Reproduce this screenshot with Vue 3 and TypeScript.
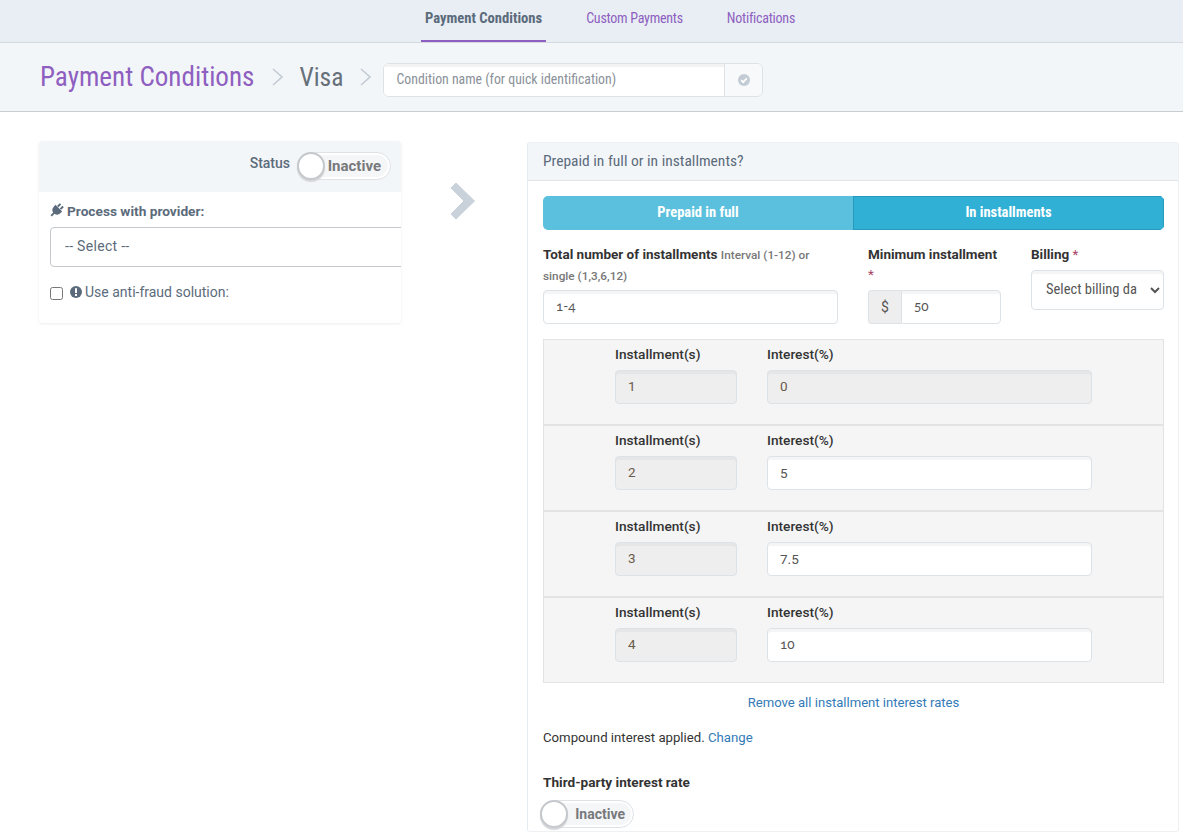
<script setup lang="ts">
interface InstallmentRow {
  count: string;
  rate: string;
  locked?: boolean;
  old?: boolean;
}

const tabs = ["Payment Conditions", "Custom Payments", "Notifications"];

const rows: InstallmentRow[] = [
  { count: "1", rate: "0", locked: true },
  { count: "2", rate: "5" },
  { count: "3", rate: "7.5" },
  { count: "4", rate: "10", old: true },
];
</script>

<template>
  <div class="page">
    <nav class="top-nav">
      <a v-for="(tab, i) in tabs" :key="tab" class="tab" :class="{ active: i === 0 }">{{ tab }}</a>
    </nav>

    <header class="crumbs">
      <span class="crumb-main">Payment Conditions</span>
      <svg class="crumb-sep" viewBox="0 0 11 18" width="11" height="18"><path d="M1 1l9 8-9 8" fill="none" stroke="#c3ccd5" stroke-width="1.6" /></svg>
      <span class="crumb-sub">Visa</span>
      <svg class="crumb-sep last" viewBox="0 0 11 18" width="11" height="18"><path d="M1 1l9 8-9 8" fill="none" stroke="#c3ccd5" stroke-width="1.6" /></svg>
      <div class="name-group">
        <input class="name-input" placeholder="Condition name (for quick identification)" />
        <span class="name-addon">
          <svg viewBox="0 0 12 12" width="12" height="12">
            <circle cx="6" cy="6" r="6" fill="#c3ccd5" />
            <path d="M3.2 6.2l2 2 3.6-3.8" fill="none" stroke="#fff" stroke-width="1.7" />
          </svg>
        </span>
      </div>
    </header>

    <main class="content">
      <section class="provider-card">
        <div class="provider-head">
          <span class="status-label">Status</span>
          <span class="toggle"><i class="knob"></i><b>Inactive</b></span>
        </div>
        <div class="provider-body">
          <label class="provider-label">
            <svg viewBox="0 0 16 16" width="15" height="15">
              <g transform="rotate(45 8 8)">
                <path d="M5 0h2v4H5zM9 0h2v4H9zM3 4.5h10v2.700a5 5 0 0 1-4 4.800V16H7v-4a5 5 0 0 1-4-4.800z" fill="#5b6b7b" />
              </g>
            </svg>
            Process with provider:
          </label>
          <select class="provider-select"><option>-- Select --</option></select>
          <label class="fraud">
            <input type="checkbox" />
            <svg viewBox="0 0 12 12" width="12" height="12">
              <circle cx="6" cy="6" r="6" fill="#5b6b7b" />
              <rect x="5" y="2.2" width="2" height="4.8" fill="#fff" />
              <rect x="5" y="8" width="2" height="2" fill="#fff" />
            </svg>
            <span>Use anti-fraud solution:</span>
          </label>
        </div>
      </section>

      <div class="arrow">
        <svg viewBox="0 0 26 38" width="26" height="38">
          <path d="M6 1L24.500 19 6 37 1 32 14 19 1 6z" fill="#c9d1da" stroke="#c9d1da" stroke-width="1" stroke-linejoin="round" />
        </svg>
      </div>

      <section class="plan-panel">
        <h3 class="plan-title">Prepaid in full or in installments?</h3>
        <div class="plan-body">
          <div class="segmented">
            <button class="seg">Prepaid in full</button>
            <button class="seg on">In installments</button>
          </div>

          <div class="fields">
            <div class="field-total">
              <label class="lbl">Total number of installments <small>Interval (1-12) or single (1,3,6,12)</small></label>
              <input class="txt old" value="1-4" />
            </div>
            <div class="field-min">
              <label class="lbl">Minimum installment <em>*</em></label>
              <div class="money">
                <span class="money-sign">$</span>
                <input class="txt old" value="50" />
              </div>
            </div>
            <div class="field-bill">
              <label class="lbl">Billing <em>*</em></label>
              <select class="bill-select"><option>Select billing day</option></select>
            </div>
          </div>

          <div class="rates">
            <div v-for="row in rows" :key="row.count" class="rate-row">
              <div class="col-count">
                <label class="lbl-sm">Installment(s)</label>
                <input class="txt" :value="row.count" disabled />
              </div>
              <div class="col-rate">
                <label class="lbl-sm">Interest(%)</label>
                <input class="txt" :class="{ old: row.old }" :value="row.rate" :disabled="row.locked" />
              </div>
            </div>
          </div>

          <a class="remove-link">Remove all installment interest rates</a>
          <p class="compound">Compound interest applied. <a>Change</a></p>
          <div class="third-label">Third-party interest rate</div>
          <span class="toggle third"><i class="knob"></i><b>Inactive</b></span>
        </div>
      </section>
    </main>
  </div>
</template>

<style>
html,
body {
  margin: 0;
  background: #fff;
  overflow: hidden;
}
</style>

<style scoped>
.page {
  height: 837px;
  overflow: hidden;
  font-family: "Roboto", "Liberation Sans", sans-serif;
  color: #333;
  font-size: 14px;
}

/* Top tabs */
.top-nav {
  display: flex;
  justify-content: center;
  gap: 36px;
  height: 42px;
  padding-left: 37px;
  background: #e8eef4;
  border-bottom: 1px solid #d5dae0;
}

.tab {
  display: block;
  padding: 0 4px;
  line-height: 37px;
  font-family: "Roboto Condensed", "Roboto", sans-serif;
  font-stretch: 75%;
  font-size: 14px;
  letter-spacing: -0.250px;
  color: #8e5fc0;
}

.tab.active {
  color: #5b6b7b;
  font-size: 14.600px;
  letter-spacing: 0;
  font-weight: 700;
  border-bottom: 2px solid #8e5fc0;
  height: 40px;
}

/* Breadcrumb header */
.crumbs {
  display: flex;
  align-items: center;
  height: 68px;
  padding-left: 40px;
  background: #f3f6f9;
  border-bottom: 1px solid #c9cdd1;
  font-family: "Roboto Condensed", "Roboto", sans-serif;
  font-stretch: 75%;
}

.crumb-main {
  font-size: 27.100px;
  color: #8e5fc0;
}

.crumb-sub {
  font-size: 25.500px;
  color: #66707a;
}

.crumb-sep {
  margin: 0 16px 0 18px;
}

.crumb-sep.last {
  margin: 0 12px 0 17px;
}

.name-group {
  display: flex;
  width: 380px;
  height: 34px;
  margin-top: 6px;
  border: 1px solid #dde2e7;
  border-radius: 6px;
  box-sizing: border-box;
  background: #fff;
  overflow: hidden;
}

.name-input {
  flex: 1;
  min-width: 0;
  border: 0;
  outline: 0;
  padding: 0 12px 2px;
  font-family: inherit;
  font-stretch: inherit;
  font-size: 13.800px;
  box-shadow: inset 0 3px 0 #f3f3f3;
}

.name-input::placeholder {
  color: #8a9199;
}

.name-addon {
  display: flex;
  align-items: center;
  justify-content: center;
  width: 37px;
  border-left: 1px solid #dde2e7;
  background: #f7f9fb;
}

/* Main columns */
.content {
  display: flex;
  align-items: flex-start;
  padding: 29px 4px 0 39px;
}

.provider-card {
  width: 362px;
  height: 182px;
  flex: none;
  overflow: hidden;
  border-radius: 3px;
  background: #fff;
  box-shadow: 0 1px 3px rgba(0, 0, 0, 0.08);
}

.provider-head {
  display: flex;
  justify-content: flex-end;
  gap: 7px;
  height: 51px;
  padding: 11px 10px 0 0;
  box-sizing: border-box;
  background: #f3f6f9;
}

.status-label {
  font-weight: 500;
  font-size: 14px;
  color: #5b6b7b;
  line-height: 22px;
}

.toggle {
  position: relative;
  display: inline-block;
  width: 94px;
  height: 28px;
  box-sizing: border-box;
  border: 1px solid #dfe3e7;
  border-radius: 14px;
  background: #f5f6f7;
  box-shadow: inset 0 0 0 2px #fff;
  text-align: right;
  padding-right: 9px;
}

.toggle b {
  font-size: 15px;
  line-height: 26px;
  color: #77797c;
}

.knob {
  position: absolute;
  left: -1px;
  top: -1px;
  width: 28px;
  height: 28px;
  box-sizing: border-box;
  border: 2px solid #c5c9cd;
  border-radius: 50%;
  background: #fff;
  box-shadow: 0 2px 1px #d5d7da;
}

.provider-body {
  padding: 10px 0 0 11px;
}

.provider-label {
  display: flex;
  align-items: center;
  gap: 3px;
  font-weight: 700;
  font-size: 13.700px;
  color: #5b6b7b;
  height: 17px;
}

.provider-label svg {
  margin-left: -1px;
}

.provider-select {
  display: block;
  width: 420px;
  height: 40px;
  margin-top: 8px;
  padding: 0 10px 2px;
  border: 1px solid #c4c8cc;
  border-radius: 4px;
  background: #fff;
  font-family: inherit;
  font-size: 14px;
  letter-spacing: 0.300px;
  color: #5b6b7b;
}

.fraud {
  display: flex;
  align-items: center;
  margin-top: 16px;
  color: #5b6b7b;
  font-size: 14px;
  height: 18px;
}

.fraud input {
  width: 13px;
  height: 13px;
  margin: 2px 7px 0 0;
}

.fraud span {
  margin-left: 3px;
}

.arrow {
  width: 126px;
  flex: none;
  padding-top: 41px;
  padding-left: 49px;
  box-sizing: border-box;
}

.plan-panel {
  flex: 1;
  height: 690px;
  margin-top: 1px;
  border-left: 1px solid #e6ebf0;
  border-right: 1px solid #eef1f4;
  border-top: 1px solid #eef1f4;
  border-bottom: 1px solid #eef1f4;
  border-radius: 3px;
  box-sizing: border-box;
}

.plan-title {
  margin: 0;
  height: 37px;
  padding-left: 15px;
  background: #f3f6f9;
  border-bottom: 1px solid #e1e5e9;
  font-family: "Roboto Condensed", "Roboto", sans-serif;
  font-stretch: 75%;
  font-weight: 400;
  font-size: 15.500px;
  line-height: 37px;
  color: #5b6b7b;
  box-sizing: content-box;
}

.plan-body {
  padding: 15px 14px 0 15px;
}

.segmented {
  display: flex;
  height: 34px;
  border-radius: 5px;
  overflow: hidden;
}

.seg {
  flex: 310 0 0;
  border: 0;
  padding: 0 0 2px;
  background: #5bc0de;
  color: #fff;
  font-family: "Roboto Condensed", "Roboto", sans-serif;
  font-stretch: 75%;
  font-weight: 700;
  font-size: 14.500px;
}

.seg.on {
  flex: 311 0 0;
  background: #31b0d5;
  box-shadow: inset 0 0 0 1px #269abc;
}

.fields {
  display: flex;
  gap: 30px;
  margin-top: 15px;
}

.field-total {
  width: 295px;
  flex: none;
}

.field-min,
.field-bill {
  width: 133px;
  flex: none;
}

.lbl {
  display: block;
  min-height: 46px;
  font-weight: 700;
  font-size: 13.500px;
  line-height: 20px;
  margin-top: -1px;
  color: #333;
  font-family: "Roboto", sans-serif;
}

.lbl small {
  font-size: 11.800px;
  line-height: 20px;
  color: #777;
  font-weight: 500;
}

.lbl em {
  color: #a94464;
  font-style: normal;
  font-weight: 400;
}

.txt {
  display: block;
  width: 100%;
  height: 34px;
  padding: 0 12px;
  box-sizing: border-box;
  border: 1px solid #dde2e7;
  border-radius: 4px;
  background: #fff;
  box-shadow: inset 0 3px 0 #f5f5f5;
  font-family: "Roboto", sans-serif;
  font-size: 13.500px;
  color: #555;
  outline: 0;
}

.txt:disabled {
  padding-bottom: 2px;
  background: #eee;
  box-shadow: inset 0 3px 0 #e6e6e6;
  color: #6a5a4a;
  opacity: 1;
}

.old {
  padding-bottom: 2px;
  font-family: "Lato", "Roboto", sans-serif;
  font-variant-numeric: oldstyle-nums;
  font-feature-settings: "onum";
}

.money {
  display: flex;
}

.money-sign {
  width: 33px;
  height: 34px;
  flex: none;
  box-sizing: border-box;
  border: 1px solid #dde2e7;
  border-right: 0;
  border-radius: 4px 0 0 4px;
  background: #eee;
  text-align: center;
  line-height: 32px;
  color: #555;
}

.money .txt {
  border-radius: 0 4px 4px 0;
}

.bill-select {
  display: block;
  width: 100%;
  height: 40px;
  margin-top: -20px;
  padding: 0 10px 2px;
  border: 1px solid #dde2e7;
  border-radius: 4px;
  background: #fff;
  box-shadow: inset 0 3px 0 #f5f5f5;
  font-family: "Roboto Condensed", "Roboto", sans-serif;
  font-stretch: 75%;
  font-size: 14.500px;
  color: #555;
}

/* Interest rows */
.rates {
  margin-top: 15px;
}

.rate-row {
  display: flex;
  gap: 30px;
  height: 86px;
  padding: 6px 0 0 71px;
  box-sizing: border-box;
  background: #f5f5f5;
  border: 1px solid #e3e3e3;
}

.col-count {
  width: 122px;
}

.col-rate {
  width: 325px;
}

.lbl-sm {
  display: block;
  height: 24px;
  font-weight: 500;
  font-size: 13.700px;
  line-height: 16px;
  color: #333;
}

.remove-link {
  display: block;
  margin-top: 11px;
  text-align: center;
  color: #337ab7;
  font-size: 13.100px;
  line-height: 18px;
}

.compound {
  margin: 17px 0 0;
  font-size: 13.200px;
  line-height: 18px;
  color: #333;
}

.compound a {
  color: #337ab7;
}

.third-label {
  margin-top: 26px;
  font-weight: 700;
  font-size: 13.600px;
  line-height: 18px;
  color: #333;
}

.toggle.third {
  display: block;
  margin: 9px 0 0 -3px;
  padding-right: 8px;
}

.toggle.third b {
  font-size: 14px;
  line-height: 26px;
}
</style>
